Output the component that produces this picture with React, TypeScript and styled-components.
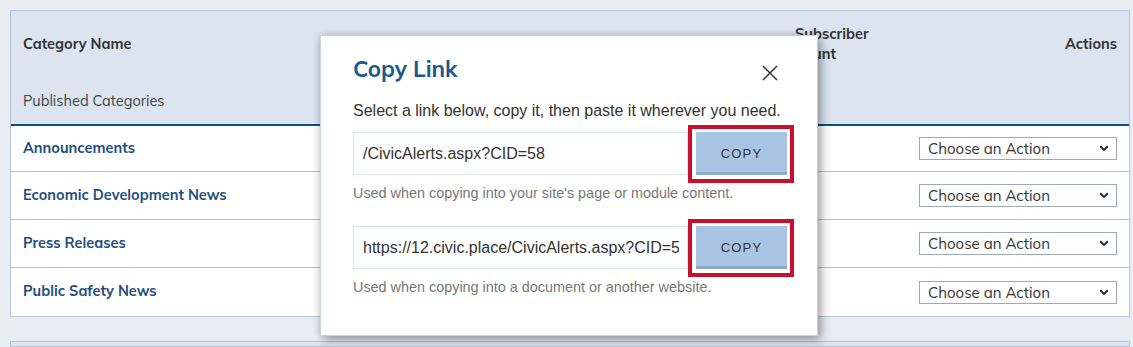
import React from "react";
import styled, { createGlobalStyle } from "styled-components";

const GlobalStyle = createGlobalStyle`
  html, body {
    margin: 0;
    padding: 0;
    background: #e8edf3;
    overflow: hidden;
  }
  body {
    font-family: "Mulish", Lato, "Noto Sans", sans-serif;
    color: #333;
  }
`;

const Page = styled.div`
  position: relative;
  padding: 10px 3px 0 10px;
  height: 347px;
  box-sizing: border-box;
  display: flex;
  flex-direction: column;
  gap: 24px;
`;

const Panel = styled.div`
  width: 1120px;
  box-sizing: border-box;
  border: 1px solid #b6c4d4;
  background: #fff;
`;

const Head = styled.div`
  background: #dbe4ef;
  border-bottom: 2px solid #0f4c81;
`;

const Grid = styled.div<{ $h: number }>`
  display: grid;
  grid-template-columns: 1fr 110px 236px;
  align-items: center;
  box-sizing: border-box;
  height: ${(p) => p.$h}px;
`;

const Cell = styled.div<{ $right?: boolean }>`
  padding: 0 12px;
  display: flex;
  justify-content: ${(p) => (p.$right ? "flex-end" : "flex-start")};
`;

const HeadLabel = styled.span`
  font-size: 14.5px;
  font-weight: 700;
  line-height: 20px;
  color: #333;
`;

const GroupLabel = styled.span`
  font-size: 14.5px;
  color: #444;
`;

const Row = styled(Grid)`
  border-bottom: 1px solid #b6c4d4;
  &:last-child {
    border-bottom: none;
  }
`;

const CategoryLink = styled.a`
  font-size: 14.5px;
  font-weight: 700;
  color: #1d4f7e;
  text-decoration: none;
  margin-top: -3px;
`;

const SelectWrap = styled.div`
  position: relative;
  width: 198px;
  height: 23px;
`;

const Select = styled.select`
  appearance: none;
  width: 100%;
  height: 100%;
  box-sizing: border-box;
  border: 1px solid #9aa8b8;
  background: #fff;
  font-family: inherit;
  font-size: 15px;
  color: #333;
  padding: 0 0 0 8px;
  border-radius: 0;
`;

const Chevron = styled.svg`
  position: absolute;
  right: 8px;
  top: 8px;
  pointer-events: none;
`;

const NextPanel = styled.div`
  width: 1120px;
  height: 40px;
  box-sizing: border-box;
  border: 1px solid #b6c4d4;
  background: #dbe4ef;
`;

const Modal = styled.div`
  position: absolute;
  left: 320px;
  top: 35px;
  width: 498px;
  height: 301px;
  box-sizing: border-box;
  background: #fff;
  border: 1px solid #c9d3de;
  box-shadow: 3px 4px 10px rgba(0, 0, 0, 0.35), 0 0 6px rgba(0, 0, 0, 0.12);
  padding: 18px 20px 0 32px;
  font-family: "Liberation Sans", Arial, sans-serif;
`;

const TitleBar = styled.div`
  display: flex;
  justify-content: space-between;
  align-items: center;
  height: 28px;
`;

const Title = styled.h2`
  margin: 0;
  font-family: "Mulish", Lato, "Noto Sans", sans-serif;
  font-size: 22.5px;
  font-weight: 700;
  color: #1b5a8b;
`;

const CloseButton = styled.button`
  border: none;
  background: none;
  padding: 0;
  margin: 9px 19px 0 0;
  cursor: pointer;
  display: flex;
`;

const Intro = styled.p`
  margin: 19px 0 11px;
  font-size: 16px;
  line-height: 20px;
  color: #333;
`;

const LinkRow = styled.div`
  display: flex;
  align-items: center;
  height: 43px;
`;

const LinkInput = styled.input`
  flex: 0 0 335px;
  height: 43px;
  box-sizing: border-box;
  border: 1px solid #dde3ea;
  padding: 0 8px 0 9px;
  font-family: "Liberation Sans", Arial, sans-serif;
  font-size: 16px;
  color: #333;
  outline: none;
`;

const Highlight = styled.div`
  flex: 0 0 auto;
  margin: -7px 0 -8px 0;
  border: 4px solid #c8102e;
  padding: 3px 3px 4px 4px;
  display: flex;
`;

const CopyButton = styled.button`
  width: 91px;
  height: 43px;
  box-sizing: border-box;
  border: none;
  border-bottom: 3px solid #8ea9c7;
  background: #a7c4e3;
  font-family: "Liberation Sans", Arial, sans-serif;
  font-size: 13px;
  letter-spacing: 1.2px;
  color: #333;
  padding: 3px 0 0;
  cursor: pointer;
`;

const Help = styled.p<{ $gap: number }>`
  margin: 9px 0 ${(p) => p.$gap}px;
  font-size: 14.4px;
  line-height: 18px;
  color: #777;
`;

const categories = [
  "Announcements",
  "Economic Development News",
  "Press Releases",
  "Public Safety News",
];

const links = [
  { value: "/CivicAlerts.aspx?CID=58", help: "Used when copying into your site's page or module content." },
  { value: "https://12.civic.place/CivicAlerts.aspx?CID=58", help: "Used when copying into a document or another website." },
];

export default function App() {
  return (
    <>
      <GlobalStyle />
      <Page>
        <Panel>
          <Head>
            <Grid $h={66}>
              <Cell>
                <HeadLabel>Category Name</HeadLabel>
              </Cell>
              <Cell>
                <HeadLabel>Subscriber Count</HeadLabel>
              </Cell>
              <Cell $right>
                <HeadLabel>Actions</HeadLabel>
              </Cell>
            </Grid>
            <Grid $h={47}>
              <Cell>
                <GroupLabel>Published Categories</GroupLabel>
              </Cell>
            </Grid>
          </Head>
          {categories.map((c, i) => (
            <Row key={c} $h={i === 0 ? 46 : 48}>
              <Cell>
                <CategoryLink href="#">{c}</CategoryLink>
              </Cell>
              <Cell />
              <Cell $right>
                <SelectWrap>
                  <Select defaultValue="">
                    <option value="">Choose an Action</option>
                  </Select>
                  <Chevron width="10" height="7" viewBox="0 0 10 7">
                    <path d="M1.2 1.2 L5 5 L8.8 1.2" fill="none" stroke="#333" strokeWidth="2" />
                  </Chevron>
                </SelectWrap>
              </Cell>
            </Row>
          ))}
        </Panel>
        <NextPanel />

        <Modal>
          <TitleBar>
            <Title>Copy Link</Title>
            <CloseButton aria-label="Close">
              <svg width="16" height="16" viewBox="0 0 16 16">
                <path d="M1 1 L15 15 M15 1 L1 15" stroke="#333" strokeWidth="1.5" fill="none" />
              </svg>
            </CloseButton>
          </TitleBar>
          <Intro>Select a link below, copy it, then paste it wherever you need.</Intro>
          {links.map((l, i) => (
            <div key={l.value}>
              <LinkRow>
                <LinkInput readOnly value={l.value} />
                <Highlight>
                  <CopyButton>COPY</CopyButton>
                </Highlight>
              </LinkRow>
              <Help $gap={i === 0 ? 24 : 0}>{l.help}</Help>
            </div>
          ))}
        </Modal>
      </Page>
    </>
  );
}
